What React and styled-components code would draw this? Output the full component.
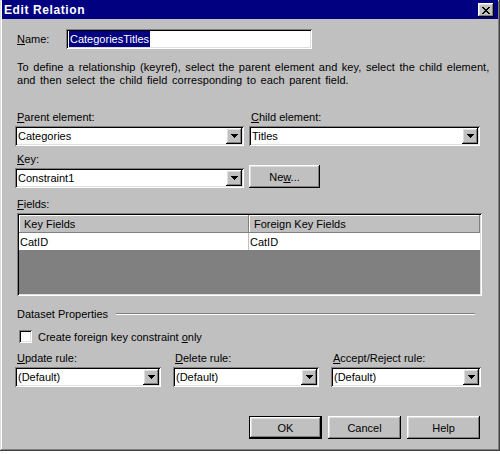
import React from "react";
import styled, { createGlobalStyle } from "styled-components";

const Global = createGlobalStyle`
  html, body { margin: 0; padding: 0; background: #ffffff; }
  body { font-family: "Liberation Sans", Arial, sans-serif; font-size: 11px; color: #000; }
  * { box-sizing: border-box; }
`;

const raised = `
  background: #c0c0c0;
  box-shadow: inset -1px -1px #000000, inset 1px 1px #ffffff, inset -2px -2px #808080, inset 2px 2px #dfdfdf;
`;

const sunken = `
  box-shadow: inset 1px 1px #808080, inset -1px -1px #ffffff, inset 2px 2px #000000, inset -2px -2px #dfdfdf;
`;

const Window = styled.div`
  width: 500px;
  height: 451px;
  background: #c0c0c0;
  padding: 0 2px 2px 2px;
  box-shadow: inset -1px -1px #404040, inset 1px 1px #dfdfdf, inset -2px -2px #808080, inset 2px 2px #ffffff;
  display: flex;
  flex-direction: column;
`;

const TitleBar = styled.div`
  height: 19px;
  background: #000080;
  display: flex;
  align-items: center;
  justify-content: space-between;
  padding: 0 4px 0 2px;
`;

const Title = styled.span`
  color: #ffffff;
  font-weight: bold;
  font-size: 12px;
  letter-spacing: 0.6px;
`;

const CloseButton = styled.div`
  ${raised}
  width: 16px;
  height: 14px;
  display: flex;
  align-items: center;
  justify-content: center;
  margin-top: 1px;
`;

const Body = styled.div`
  display: flex;
  flex-direction: column;
  padding: 0 18px 0 13px;
`;

const NameRow = styled.div`
  display: flex;
  align-items: center;
  margin-top: 10px;
  height: 20px;
`;

const NameLabel = styled.span`
  width: 51px;
  padding-left: 2px;
`;

const Field = styled.div`
  ${sunken}
  background: #ffffff;
  height: ${(p) => p.$h || 20}px;
  width: ${(p) => (p.$w ? p.$w + "px" : "100%")};
  display: flex;
  align-items: center;
  padding: 2px 2px 2px 3px;
  position: relative;
`;

const Selected = styled.span`
  background: #000080;
  color: #ffffff;
  padding: 1px 1px;
  line-height: 14px;
`;

const Description = styled.p`
  margin: 12px 0 0 2px;
  line-height: 13px;
  white-space: nowrap;
  word-spacing: 1.4px;
  letter-spacing: 0.05px;
`;

const TwoCol = styled.div`
  display: grid;
  grid-template-columns: 229px 231px;
  column-gap: 5px;
  align-items: end;
  margin-top: ${(p) => p.$mt}px;
`;

const ThreeCol = styled.div`
  display: grid;
  grid-template-columns: 146px 146px 150px;
  column-gap: 12px;
  margin-top: ${(p) => p.$mt}px;
`;

const Group = styled.div`
  display: flex;
  flex-direction: column;
`;

const Label = styled.span`
  line-height: 13px;
  margin-bottom: 2px;
  padding-left: ${(p) => p.$pl ?? 2}px;
`;

const SelectText = styled.span`
  flex: 1;
  white-space: nowrap;
  overflow: hidden;
`;

const DropButton = styled.div`
  ${raised}
  width: 16px;
  height: 16px;
  display: flex;
  align-items: center;
  justify-content: center;
  flex-shrink: 0;
`;

const PushButton = styled.div`
  ${raised}
  width: ${(p) => p.$w}px;
  height: 23px;
  display: flex;
  align-items: center;
  justify-content: center;
  ${(p) =>
    p.$default
      ? `box-shadow: inset 0 0 0 1px #000000, inset -2px -2px #000000, inset 2px 2px #ffffff, inset -3px -3px #808080, inset 3px 3px #dfdfdf;`
      : ""}
`;

const FieldsLabel = styled.span`
  margin-top: 10px;
  line-height: 13px;
  margin-bottom: 2px;
  padding-left: 2px;
`;

const GridBox = styled.div`
  ${sunken}
  background: #808080;
  height: 83px;
  width: 465px;
  margin-left: 2px;
  padding: 2px;
  display: flex;
  flex-direction: column;
`;

const GridRow = styled.div`
  display: grid;
  grid-template-columns: 230px 1fr;
  height: ${(p) => p.$h}px;
  background: ${(p) => (p.$header ? "#c0c0c0" : "#ffffff")};
`;

const HeaderCell = styled.div`
  background: #c0c0c0;
  box-shadow: inset -1px -1px #808080, inset 1px 1px #ffffff;
  display: flex;
  align-items: center;
  padding-left: 5px;
`;

const DataCell = styled.div`
  display: flex;
  align-items: center;
  padding-left: 1px;
  border-right: 1px solid ${(p) => (p.$last ? "transparent" : "#c0c0c0")};
`;

const GroupHeading = styled.div`
  display: flex;
  align-items: center;
  margin-top: 11px;
  height: 13px;
  padding-left: 2px;
  padding-right: 5px;
  white-space: nowrap;
`;

const HeadingLine = styled.div`
  flex: 1;
  margin-left: 8px;
  height: 2px;
  border-top: 1px solid #808080;
  border-bottom: 1px solid #ffffff;
`;

const CheckRow = styled.div`
  display: flex;
  align-items: center;
  margin-top: 10px;
  height: 13px;
  padding-left: 4px;
`;

const CheckBox = styled.div`
  ${sunken}
  background: #ffffff;
  width: 13px;
  height: 13px;
  margin-right: 6px;
`;

const ButtonRow = styled.div`
  display: flex;
  justify-content: flex-end;
  gap: 6px;
  margin-top: 29px;
  padding-right: 0px;
`;

const Arrow = () => (
  <svg width="7" height="4" viewBox="0 0 7 4">
    <path d="M0 0h7v1H0zM1 1h5v1H1zM2 2h3v1H2zM3 3h1v1H3z" fill="#000" />
  </svg>
);

const CloseGlyph = () => (
  <svg width="8" height="7" viewBox="0 0 8 7">
    <path
      d="M0 0h2v1H0zM6 0h2v1H6zM1 1h2v1H1zM5 1h2v1H5zM2 2h4v1H2zM3 3h2v1H3zM2 4h4v1H2zM1 5h2v1H1zM5 5h2v1H5zM0 6h2v1H0zM6 6h2v1H6z"
      fill="#000"
    />
  </svg>
);

const Select = ({ value, w }) => (
  <Field $w={w}>
    <SelectText>{value}</SelectText>
    <DropButton>
      <Arrow />
    </DropButton>
  </Field>
);

export default function App() {
  return (
    <>
      <Global />
      <Window>
        <TitleBar>
          <Title>Edit Relation</Title>
          <CloseButton>
            <CloseGlyph />
          </CloseButton>
        </TitleBar>
        <Body>
          <NameRow>
            <NameLabel>
              <u>N</u>ame:
            </NameLabel>
            <Field $w={246}>
              <Selected>CategoriesTitles</Selected>
            </Field>
          </NameRow>
          <Description>
            To define a relationship (keyref), select the parent element and key, select the child element,
            <br />
            and then select the child field corresponding to each parent field.
          </Description>
          <TwoCol $mt={24}>
            <Group>
              <Label>
                <u>P</u>arent element:
              </Label>
              <Select value="Categories" />
            </Group>
            <Group>
              <Label>
                <u>C</u>hild element:
              </Label>
              <Select value="Titles" />
            </Group>
          </TwoCol>
          <TwoCol $mt={7}>
            <Group>
              <Label>
                <u>K</u>ey:
              </Label>
              <Select value="Constraint1" />
            </Group>
            <PushButton $w={71}>
              <span>
                Ne<u>w</u>...
              </span>
            </PushButton>
          </TwoCol>
          <FieldsLabel>
            <u>F</u>ields:
          </FieldsLabel>
          <GridBox>
            <GridRow $header $h={18}>
              <HeaderCell>Key Fields</HeaderCell>
              <HeaderCell>Foreign Key Fields</HeaderCell>
            </GridRow>
            <GridRow $h={17}>
              <DataCell>CatID</DataCell>
              <DataCell $last>CatID</DataCell>
            </GridRow>
          </GridBox>
          <GroupHeading>
            <span>Dataset Properties</span>
            <HeadingLine />
          </GroupHeading>
          <CheckRow>
            <CheckBox />
            <span>
              Create foreign key constraint <u>o</u>nly
            </span>
          </CheckRow>
          <ThreeCol $mt={9}>
            <Group>
              <Label>
                <u>U</u>pdate rule:
              </Label>
              <Select value="(Default)" />
            </Group>
            <Group>
              <Label>
                <u>D</u>elete rule:
              </Label>
              <Select value="(Default)" />
            </Group>
            <Group>
              <Label>
                <u>A</u>ccept/Reject rule:
              </Label>
              <Select value="(Default)" />
            </Group>
          </ThreeCol>
          <ButtonRow>
            <PushButton $w={73} $default>
              OK
            </PushButton>
            <PushButton $w={73}>Cancel</PushButton>
            <PushButton $w={73}>Help</PushButton>
          </ButtonRow>
        </Body>
      </Window>
    </>
  );
}
